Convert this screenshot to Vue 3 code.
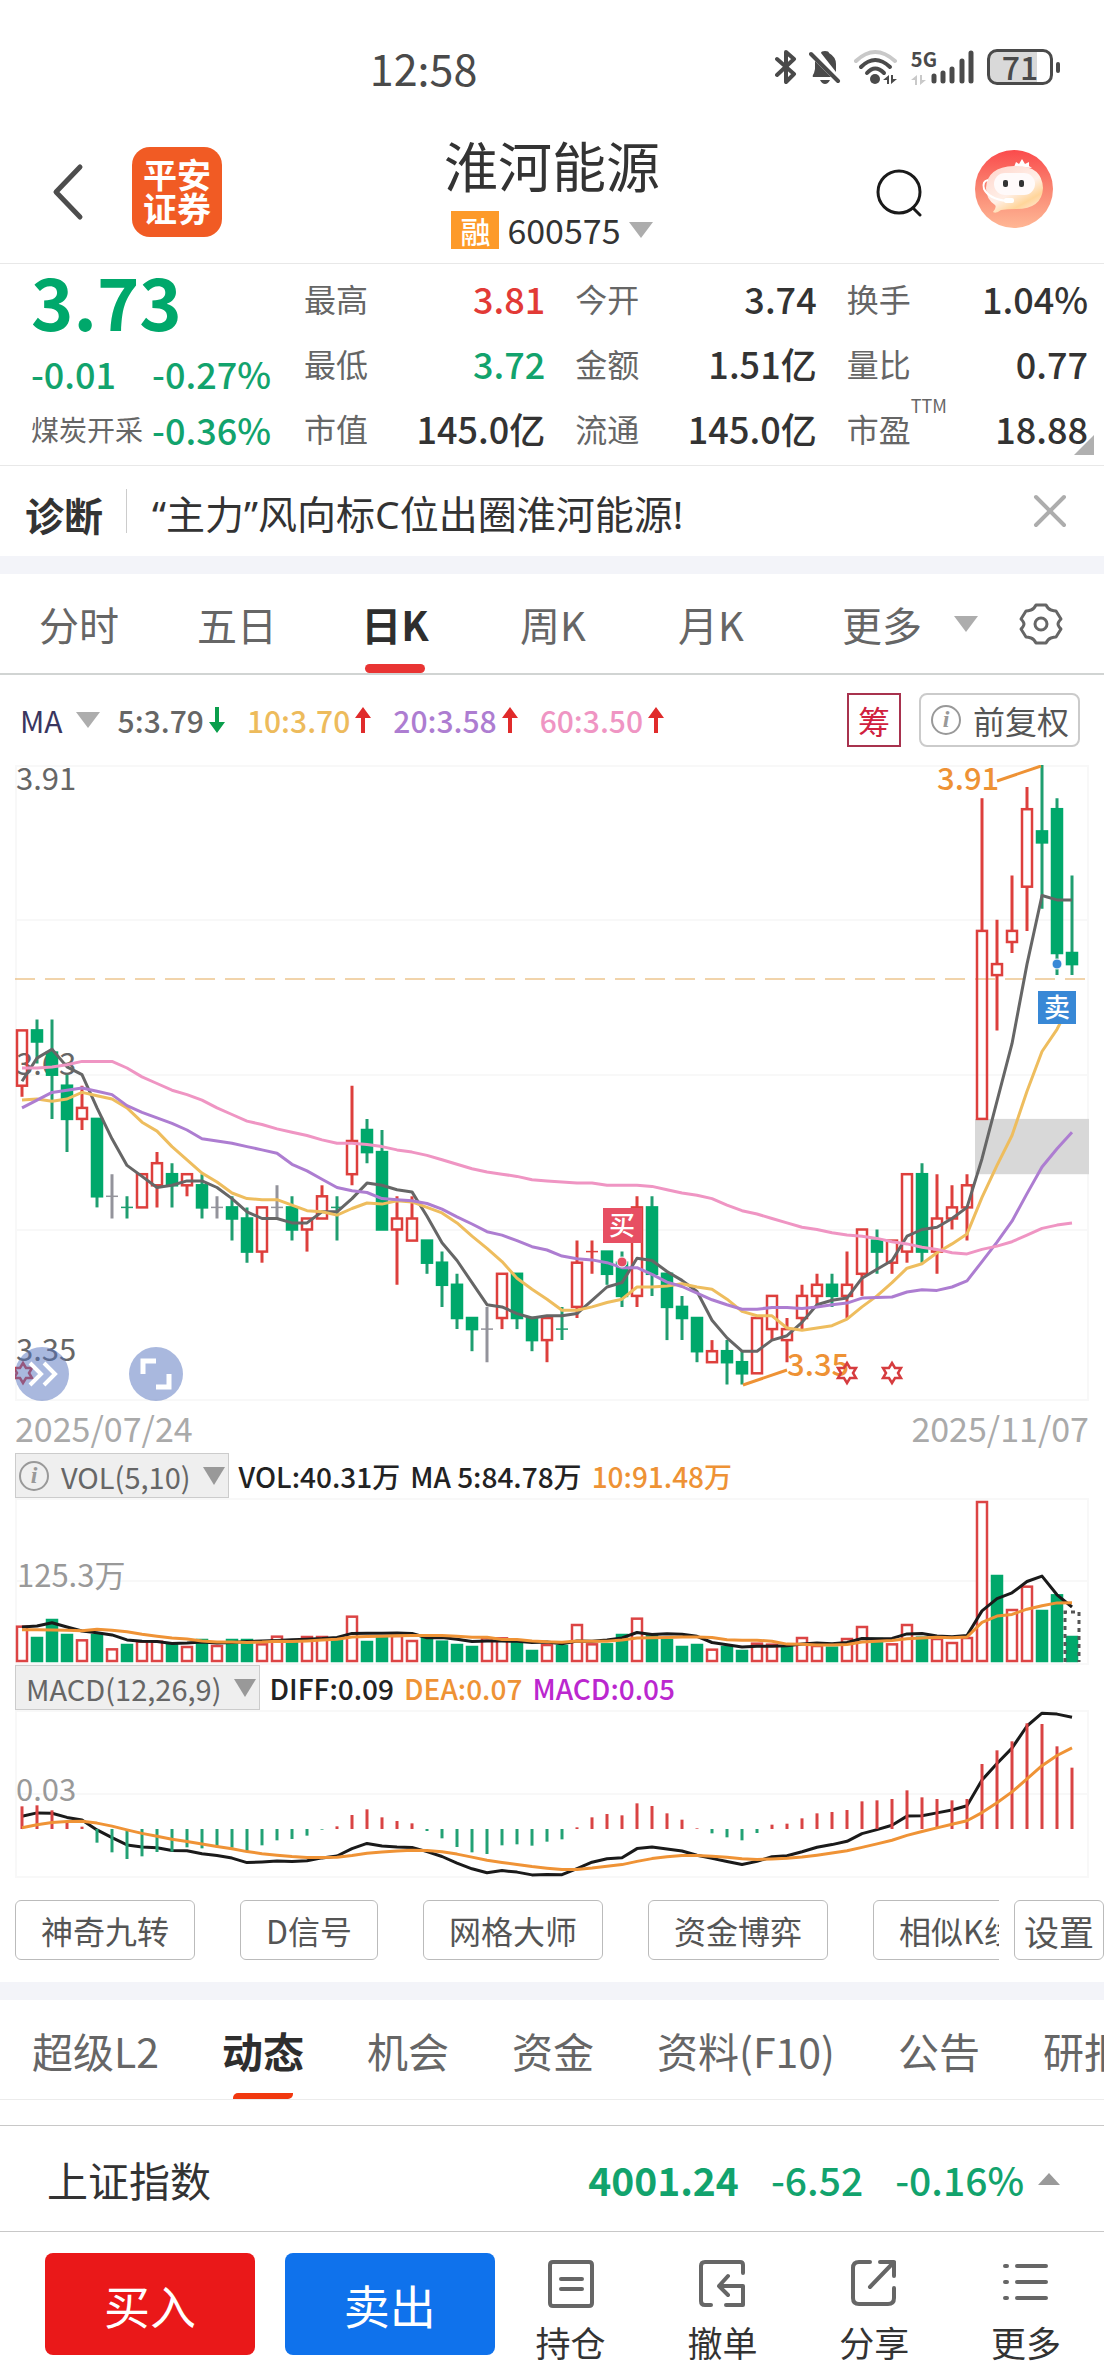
<template>
  <div class="page">
    <!-- 状态栏 -->
    <div class="status-bar">
      <span class="clock">12:58</span>
      <div class="status-icons">
        <svg class="ic-bt" width="22" height="36" viewBox="0 0 22 36">
          <path
            d="M2 10 L19 25 L11 33 L11 3 L19 10 L2 26"
            fill="none"
            stroke="#4a4a4a"
            stroke-width="4"
            stroke-linejoin="round"
            stroke-linecap="round"
          />
        </svg>
        <svg class="ic-bell" width="32" height="36" viewBox="0 0 32 36">
          <path
            d="M12 4 Q12 2 16 2 Q20 2 20 4 Q27 8 27 15 L27 23 Z M6 12 L22 28 L4 28 Q3 27 5 24 L6 20 Z"
            fill="#4a4a4a"
          />
          <path d="M11 31 H21 Q19 35 16 35 Q13 35 11 31 Z" fill="#4a4a4a" />
          <path d="M2 5 L29 32" stroke="#4a4a4a" stroke-width="4" stroke-linecap="round" />
        </svg>
        <svg class="ic-wifi" width="46" height="36" viewBox="0 0 46 36">
          <g fill="none" stroke-width="4" stroke-linecap="round">
            <path d="M3 12 Q22 -6 42 12" stroke="#c9c9c9" />
            <path d="M8 18 Q22 4 37 18" stroke="#4a4a4a" />
            <path d="M14 24 Q22 15 31 24" stroke="#4a4a4a" />
          </g>
          <circle cx="22" cy="30" r="5" fill="#4a4a4a" />
          <path d="M30 31 L36 26 V35 H34 V31 Z M38 26 H40 V30 L44 30 L38 35 Z" fill="#4a4a4a" />
        </svg>
        <div class="cell">
          <div class="cell-net">
            <span>5G</span>
            <svg width="16" height="10" viewBox="0 0 16 10">
              <path d="M0 5 L6 0 V10 H4 V5 Z M9 0 H11 V5 H15 L9 10 Z" fill="#c9c9c9" />
            </svg>
          </div>
          <svg width="46" height="36" viewBox="0 0 46 36">
            <path
              d="M5 27 V32 M14 24 V32 M23 20 V32 M33 12 V32 M42 4 V32"
              stroke="#4a4a4a"
              stroke-width="5"
              stroke-linecap="round"
            />
          </svg>
        </div>
        <div class="battery"><span>71</span></div>
      </div>
    </div>

    <!-- 标题 -->
    <header class="header">
      <div class="header-side">
        <button class="icon-btn" aria-label="返回">
          <svg width="34" height="58" viewBox="0 0 34 58">
            <path
              d="M30 4 L6 29 L30 54"
              fill="none"
              stroke="#4d4d4d"
              stroke-width="5"
              stroke-linecap="round"
              stroke-linejoin="round"
            />
          </svg>
        </button>
        <div class="logo">平安<br />证券</div>
      </div>
      <div class="title-box">
        <h1>淮河能源</h1>
        <button class="code">
          <span class="rong">融</span>
          <span>600575</span>
          <i class="tri"></i>
        </button>
      </div>
      <div class="header-side right">
        <button class="icon-btn" aria-label="搜索">
          <svg width="50" height="56" viewBox="0 0 50 56">
            <circle cx="25" cy="31" r="21" fill="none" stroke="#1a1a1a" stroke-width="3" />
            <path d="M39 47 L46 54" stroke="#1a1a1a" stroke-width="3" stroke-linecap="round" />
          </svg>
        </button>
        <button class="icon-btn" aria-label="客服">
          <svg width="80" height="80" viewBox="0 0 80 80">
            <defs>
              <linearGradient id="robot-bg" x1="0" y1="0" x2="0" y2="1">
                <stop offset="0" stop-color="#fb4b4c" />
                <stop offset="0.5" stop-color="#f98672" />
                <stop offset="1" stop-color="#ffb795" />
              </linearGradient>
              <linearGradient id="robot-body" x1="0.1" y1="0" x2="0.8" y2="1">
                <stop offset="0" stop-color="#ffd6cd" />
                <stop offset="0.55" stop-color="#fff0e8" />
                <stop offset="0.8" stop-color="#ffd59a" />
                <stop offset="1" stop-color="#ffe6d5" />
              </linearGradient>
            </defs>
            <circle cx="40" cy="40" r="39" fill="url(#robot-bg)" />
            <path d="M40 18 L42 13 L45 15 L48 10 L51 15 L55 13 L55 17 L58 19 Z" fill="#fff" />
            <path
              d="M40 17 Q68 16 69 39 Q68 60 42 60 Q33 60 27 61 Q22 65 19 63 Q23 58 21 56 Q12 50 12 39 Q13 18 40 17 Z"
              fill="url(#robot-body)"
            />
            <rect x="20" y="24" width="41" height="22" rx="11" fill="#fffafa" />
            <rect x="29" y="31" width="5" height="7" rx="2" fill="#333" />
            <rect x="45" y="31" width="5" height="7" rx="2" fill="#333" />
            <path
              d="M14 31 Q8 32 10 40 Q15 50 33 52"
              fill="none"
              stroke="#fff"
              stroke-width="2"
            />
            <rect x="30" y="49" width="10" height="5" rx="2" fill="#fff" />
          </svg>
        </button>
      </div>
    </header>

    <!-- 行情 -->
    <section class="quote">
      <div class="quote-main">
        <strong class="price">3.73</strong>
        <div class="change down"><span>-0.01</span><span>-0.27%</span></div>
        <div class="change down"><small>煤炭开采</small><span>-0.36%</span></div>
      </div>
      <dl class="stats">
        <div v-for="s in stats" :key="s.label" class="stat">
          <dt>{{ s.label }}<sup v-if="s.sup">{{ s.sup }}</sup></dt>
          <dd :class="s.cls">{{ s.value }}</dd>
        </div>
      </dl>
      <i class="corner"></i>
    </section>

    <!-- 诊断 -->
    <section class="diagnose">
      <b>诊断</b>
      <a href="#">“主力”风向标C位出圈淮河能源!</a>
      <button class="icon-btn" aria-label="关闭">
        <svg width="34" height="34" viewBox="0 0 34 34">
          <path
            d="M3 3 L31 31 M31 3 L3 31"
            stroke="#adadad"
            stroke-width="4"
            stroke-linecap="round"
          />
        </svg>
      </button>
    </section>

    <!-- 周期 -->
    <nav class="periods">
      <button v-for="p in periods" :key="p" :class="{ active: p === '日K' }">{{ p }}</button>
      <div class="period-more">
        <button>更多</button>
        <i class="tri"></i>
        <button aria-label="图表设置">
          <svg width="44" height="44" viewBox="0 0 44 44">
            <path
              d="M17 3 H27 Q29 7 32 8 Q35 9 37 9 L42 17 Q39 20 39 22 Q39 24 42 27 L37 35 Q35 35 32 36 Q29 37 27 41 H17 Q15 37 12 36 Q9 35 7 35 L2 27 Q5 24 5 22 Q5 20 2 17 L7 9 Q9 9 12 8 Q15 7 17 3 Z"
              fill="none"
              stroke="#666"
              stroke-width="3"
              stroke-linejoin="round"
            />
            <circle cx="22" cy="22" r="6" fill="none" stroke="#666" stroke-width="3" />
          </svg>
        </button>
      </div>
    </nav>

    <!-- 均线 -->
    <div class="ma-row">
      <button class="ma-name">MA<i class="tri"></i></button>
      <span v-for="m in maList" :key="m.text" class="ma-item" :class="m.cls">
        {{ m.text }}
        <svg width="16" height="26" viewBox="0 0 16 26">
          <path v-if="m.up" d="M8 0 L16 11 H10 V26 H6 V11 H0 Z" fill="#e02b2b" />
          <path v-else d="M8 26 L16 15 H10 V0 H6 V15 H0 Z" fill="#0a9e4c" />
        </svg>
      </span>
      <button class="chip-chou">筹</button>
      <button class="chip-fq"><i class="info">i</i>前复权</button>
    </div>

    <!-- K线 -->
    <div class="charts">
      <div class="k-box">
        <svg class="chart" viewBox="0 0 1074 636">
          <path class="grid" d="M0 1 H1074 M0 155 H1074 M0 310 H1074 M0 465 H1074 M0 635 H1074 M1 0 V636 M1073 0 V636" />
          <text x="1" y="25" class="axis dark">3.91</text>
          <text x="1" y="310" class="axis dark">3.63</text>
          <text x="1" y="596" class="axis dark">3.35</text>
          <rect x="960" :y="yPrice(24)" width="114" :height="yPrice(19) - yPrice(24)" fill="#d8d8d8" />
          <path d="M0 214 H1074" stroke="#e3a857" stroke-width="1" stroke-dasharray="20 10" />
          <g v-for="k in candles" :key="k.x" :stroke="k.wick" stroke-width="3">
            <path :d="k.line" />
            <rect
              v-if="k.h > 0"
              :x="k.x - 5"
              :y="k.y"
              width="10"
              :height="k.h"
              :fill="k.fill"
              :stroke="k.body"
              stroke-width="2.5"
            />
            <path v-else :d="`M${k.x - 6} ${k.y} H${k.x + 6}`" stroke-width="1.5" />
          </g>
          <g fill="none" stroke-width="3" stroke-linejoin="round">
            <polyline :points="pts(ma5, yPrice)" stroke="#666" />
            <polyline :points="pts(ma10, yPrice)" stroke="#eebd5e" />
            <polyline :points="pts(ma20, yPrice)" stroke="#ad7dd1" />
            <polyline :points="pts(ma60, yPrice)" stroke="#ef95c3" />
          </g>
          <path d="M982 16 L1026 1 M728 620 L772 605" stroke="#ee9235" stroke-width="3" />
          <text x="922" y="25" class="axis orange">3.91</text>
          <text x="772" y="611" class="axis orange">3.35</text>
          <path
            v-for="x in [8, 832, 877]"
            :key="x"
            :transform="`translate(${x} 608)`"
            d="M0 -10 L3 -5 H9 L6 0 L9 5 H3 L0 10 L-3 5 H-9 L-6 0 L-9 -5 H-3 Z"
            fill="none"
            stroke="#d63c3f"
            stroke-width="2.5"
          />
          <circle cx="607" cy="497" r="5" fill="#e74f63" stroke="#fff" />
          <rect x="588" y="443" width="39" height="35" fill="#e74f63" />
          <text x="607" y="470" class="tag">买</text>
          <circle cx="1042" cy="199" r="5" fill="#3888d6" stroke="#fff" />
          <rect x="1023" y="226" width="38" height="33" fill="#3888d6" />
          <text x="1042" y="252" class="tag">卖</text>
        </svg>
        <div class="floats">
          <button aria-label="展开">
            <svg width="54" height="54" viewBox="0 0 54 54">
              <path
                d="M15 16 L26 27 L15 38 M29 16 L40 27 L29 38"
                fill="none"
                stroke="#fff"
                stroke-width="4"
              />
            </svg>
          </button>
          <button aria-label="全屏">
            <svg width="54" height="54" viewBox="0 0 54 54">
              <path
                d="M14 27 V14 H27 M40 27 V40 H27"
                fill="none"
                stroke="#fff"
                stroke-width="5"
              />
            </svg>
          </button>
        </div>
      </div>
      <div class="dates"><span>2025/07/24</span><span>2025/11/07</span></div>

      <!-- 成交量 -->
      <div class="ind-row">
        <button><i class="info">i</i>VOL(5,10)<i class="tri"></i></button>
        <span>VOL:40.31万</span>
        <span>MA 5:84.78万</span>
        <span class="orange">10:91.48万</span>
      </div>
      <svg class="chart" viewBox="0 0 1074 167">
        <path class="grid" d="M0 1 H1074 M0 83 H1074 M0 166 H1074 M1 0 V167 M1073 0 V167" />
        <text x="2" y="89" class="axis light">125.3万</text>
        <rect
          v-for="b in volBars"
          :key="b.x"
          :x="b.x - 5"
          :y="b.y"
          width="10"
          :height="b.h"
          :fill="b.up ? '#fff' : '#00a86b'"
          :stroke="b.up ? '#dc4444' : '#00a86b'"
          stroke-width="2.5"
        />
        <path
          d="M1050 164 V114 H1064 V164"
          fill="none"
          stroke="#555"
          stroke-width="3"
          stroke-dasharray="4 4"
        />
        <g fill="none" stroke-width="3" stroke-linejoin="round">
          <polyline :points="pts(volMa5, yVol)" stroke="#1a1a1a" />
          <polyline :points="pts(volMa10, yVol)" stroke="#ef9336" />
        </g>
      </svg>

      <!-- MACD -->
      <div class="ind-row">
        <button class="plain">MACD(12,26,9)<i class="tri"></i></button>
        <span>DIFF:0.09</span>
        <span class="orange">DEA:0.07</span>
        <span class="purple">MACD:0.05</span>
      </div>
      <svg class="chart" viewBox="0 0 1074 168">
        <path class="grid" d="M0 1 H1074 M0 84 H1074 M0 167 H1074 M1 0 V168 M1073 0 V168" />
        <text x="1" y="91" class="axis light">0.03</text>
        <polyline
          :points="pts(diff, yMacd)"
          fill="none"
          stroke="#1a1a1a"
          stroke-width="3"
          stroke-linejoin="round"
        />
        <path
          v-for="(m, i) in macd"
          :key="i"
          :d="`M${xAt(i)} 119 V${yMacd(m)}`"
          :stroke="m > 0 ? '#d94343' : '#22a174'"
          stroke-width="3"
        />
        <polyline
          :points="pts(dea, yMacd)"
          fill="none"
          stroke="#ef9336"
          stroke-width="3"
          stroke-linejoin="round"
        />
      </svg>
    </div>

    <!-- 工具 -->
    <div class="tools">
      <div class="tools-list">
        <button v-for="t in tools" :key="t">{{ t }}</button>
      </div>
      <button class="tools-set">设置</button>
    </div>

    <nav class="info-tabs">
      <button v-for="t in infoTabs" :key="t" :class="{ active: t === '动态' }">{{ t }}</button>
    </nav>

    <!-- 指数 -->
    <div class="index-row">
      <span class="index-name">上证指数</span>
      <b>4001.24</b>
      <span>-6.52</span>
      <span>-0.16%</span>
      <i class="tri up"></i>
    </div>

    <footer class="footer">
      <button class="trade buy">买入</button>
      <button class="trade sell">卖出</button>
      <div class="actions">
        <button v-for="a in actions" :key="a.name">
          <svg width="48" height="50" viewBox="0 0 48 50">
            <path
              :d="a.path"
              fill="none"
              stroke="#666"
              stroke-width="4"
              stroke-linecap="round"
              stroke-linejoin="round"
            />
          </svg>
          <span>{{ a.name }}</span>
        </button>
      </div>
    </footer>
  </div>
</template>

<script setup>
const stats = [
  { label: '最高', value: '3.81', cls: 'up' },
  { label: '今开', value: '3.74' },
  { label: '换手', value: '1.04%' },
  { label: '最低', value: '3.72', cls: 'down' },
  { label: '金额', value: '1.51亿' },
  { label: '量比', value: '0.77' },
  { label: '市值', value: '145.0亿' },
  { label: '流通', value: '145.0亿' },
  { label: '市盈', value: '18.88', sup: 'TTM' },
];

const periods = ['分时', '五日', '日K', '周K', '月K'];

const maList = [
  { text: '5:3.79', cls: 'm5', up: false },
  { text: '10:3.70', cls: 'm10', up: true },
  { text: '20:3.58', cls: 'm20', up: true },
  { text: '60:3.50', cls: 'm60', up: true },
];

const tools = ['神奇九转', 'D信号', '网格大师', '资金博弈', '相似K线'];
const infoTabs = ['超级L2', '动态', '机会', '资金', '资料(F10)', '公告', '研报'];

const actions = [
  {
    name: '持仓',
    path: 'M6 3 H42 Q45 3 45 6 V44 Q45 47 42 47 H6 Q3 47 3 44 V6 Q3 3 6 3 Z M14 20 H35 M14 30 H35',
  },
  {
    name: '撤单',
    path: 'M45 14 V6 Q45 3 42 3 H7 Q3 3 3 7 V42 Q3 46 7 46 H13 M28 46 H45 V27 H21 M30 17 L21 27 L30 36',
  },
  {
    name: '分享',
    path: 'M20 3 H9 Q3 3 3 9 V39 Q3 45 9 45 H38 Q44 45 44 39 V29 M30 3 H44 V17 M44 3 L20 28',
  },
  { name: '更多', path: 'M3 7 H5 M15 7 H44 M3 23 H5 M15 23 H44 M3 39 H5 M15 39 H44' },
];

// [开, 高, 低, 收]，单位 0.01 元，以 3.35 为 0
const kline = [
  [27, 32, 26, 32], [32, 33, 29, 31], [30, 33, 24, 28], [27, 28, 21, 24], [24, 27, 23, 25],
  [24, 24, 16, 17], [17, 19, 15, 17], [16, 17, 15, 16], [16, 19, 16, 19], [18, 21, 16, 20],
  [19, 20, 16, 18], [18, 19, 17, 19], [18, 19, 15, 16], [16, 17, 15, 16], [16, 17, 13, 15],
  [15, 16, 11, 12], [12, 16, 11, 16], [16, 18, 15, 16], [16, 17, 13, 14], [14, 15, 12, 15],
  [15, 18, 15, 17], [16, 17, 13, 16], [19, 27, 18, 22], [23, 24, 20, 21], [21, 23, 14, 14],
  [14, 17, 9, 15], [13, 17, 13, 15], [13, 13, 10, 11], [11, 12, 7, 9], [9, 10, 5, 6],
  [6, 6, 3, 5], [5, 7, 2, 5], [6, 10, 5, 10], [10, 10, 5, 6], [6, 6, 3, 4],
  [4, 6, 2, 6], [5, 7, 4, 5], [7, 13, 6, 11], [12, 13, 10, 12], [12, 12, 9, 10],
  [11, 12, 7, 8], [8, 17, 7, 16], [16, 17, 8, 10], [10, 10, 4, 7], [7, 8, 4, 6],
  [6, 6, 2, 3], [2, 4, 2, 3], [3, 4, 0, 2], [2, 3, 0, 1], [1, 6, 1, 6],
  [5, 8, 4, 8], [4, 6, 2, 5], [6, 9, 5, 8], [8, 10, 7, 9], [9, 10, 7, 8],
  [8, 12, 6, 9], [10, 14, 8, 14], [13, 14, 10, 12], [11, 13, 10, 13], [12, 19, 11, 19],
  [19, 20, 11, 12], [12, 19, 10, 15], [15, 18, 14, 16], [16, 19, 13, 18], [24, 53, 24, 41],
  [37, 42, 32, 38], [40, 46, 39, 41], [45, 54, 41, 52], [50, 56, 43, 49], [52, 53, 37, 39],
  [39, 46, 37, 38],
];

const volume = [
  109, 75, 129, 84, 68, 84, 41, 54, 64, 64, 54, 48, 69, 51, 69, 69, 56, 79, 60, 78, 78, 74, 139,
  63, 78, 81, 66, 77, 64, 54, 48, 74, 74, 60, 36, 54, 51, 114, 56, 56, 84, 133, 82, 69, 48, 54, 40,
  48, 36, 58, 55, 48, 75, 51, 46, 72, 108, 72, 56, 114, 76, 72, 60, 75, 483, 261, 159, 229, 156,
  203, 78,
];

const macd = [
  68, 71, 56, 25, 7, -41, -70, -90, -82, -69, -68, -55, -58, -55, -56, -66, -49, -34, -30, -20, -2,
  8, 42, 59, 35, 24, 17, -6, -28, -54, -70, -75, -49, -46, -50, -38, -31, 5, 35, 45, 41, 77, 69, 47,
  28, 2, -13, -25, -34, -12, 13, 16, 32, 47, 51, 57, 83, 86, 90, 116, 95, 90, 86, 90, 195, 236, 263,
  317, 315, 248, 184,
];

const ma60 = [
  28.6, 28.6, 28.7, 28.9, 29.2, 29.2, 29.2, 28.6, 27.8, 27.2, 26.6, 26.2, 25.7, 25, 24.4, 23.8,
  23.5, 23.1, 22.8, 22.5, 22.1, 21.8, 21.8, 21.7, 21.5, 21.2, 21, 20.7, 20.3, 19.9, 19.5, 19.2, 19,
  18.8, 18.5, 18.4, 18.3, 18.2, 18.2, 18, 18, 18, 17.9, 17.6, 17.3, 17.1, 16.8, 16.2, 15.7, 15.4,
  15, 14.6, 14.2, 14, 13.7, 13.5, 13.4, 13.2, 12.9, 12.7, 12.4, 12.2, 11.9, 11.8, 12.2, 12.5, 12.9,
  13.5, 14.1, 14.4, 14.6,
];

const xAt = (i) => 7 + i * 15;
const yPrice = (n) => Math.round((56 - n) * 11.06 * 10) / 10;
const yVol = (v) => 164 - v / 3;
const yMacd = (v) => Math.min(165, 119 - v / 3);
const pts = (list, y) => list.map((v, i) => `${xAt(i)},${y(v).toFixed(1)}`).join(' ');

// 前几根没有足够历史，用 head 补齐
const average = (list, n, head) =>
  list.map((_, i) =>
    i < n - 1 ? head[i] : list.slice(i - n + 1, i + 1).reduce((a, b) => a + b, 0) / n
  );

const closes = kline.map((k) => k[3]);
const ma5 = average(closes, 5, [27.4, 29.5, 30.3, 28.7]);
const ma10 = average(closes, 10, [25.7, 25.8, 25.6, 25.8, 26.4, 26.1, 25.8, 25, 23.7]);
const ma20 = average(closes, 20, [
  25, 25.7, 26.4, 26.6, 26.8, 26.5, 26.2, 25.2, 24.6, 24.1, 23.6, 23, 22.2, 22, 21.8, 21.5, 21.2,
  20.9, 19.9,
]);
const volMa5 = average(volume, 5, [105, 108, 118, 105]);
const volMa10 = average(volume, 10, [97, 97, 96, 95, 94, 98, 95, 91, 83]);

const candles = kline.map(([o, h, l, c], i) => {
  const x = xAt(i);
  const prev = i ? closes[i - 1] : o;
  const dir = Math.sign(c - o || c - prev);
  const wick = dir > 0 ? '#dd3f3c' : dir < 0 ? '#1f9e70' : '#93939b';
  const top = yPrice(Math.max(o, c));
  const bottom = yPrice(Math.min(o, c));
  return {
    x,
    y: top,
    h: bottom - top,
    wick,
    body: dir > 0 ? '#dd3f3c' : '#00a86b',
    fill: dir > 0 ? 'none' : '#00a86b',
    line: `M${x} ${yPrice(h)} V${top} M${x} ${bottom} V${yPrice(l)}`,
  };
});

const volBars = volume.map((v, i) => ({
  x: xAt(i),
  y: yVol(v) + 1,
  h: v / 3 - 2,
  up: i === 0 || closes[i] >= closes[i - 1],
}));

const dea = [];
macd.forEach((m, i) => dea.push(i ? dea[i - 1] + m / 8 - 0.2 : 4));
const diff = macd.map((m, i) => dea[i] + m / 2);
</script>

<style>
body {
  margin: 0;
  background: #fff;
}
</style>

<style scoped>
.page {
  font-family: 'Noto Sans CJK SC', sans-serif;
  color: #333;
  background: #fff;
  overflow: hidden;
}

button {
  font: inherit;
  color: inherit;
  background: none;
  border: 0;
  padding: 0;
}

svg {
  display: block;
}

a {
  color: inherit;
  text-decoration: none;
}

.tri {
  flex: none;
  border: 12px solid transparent;
  border-top: 16px solid #adadad;
  border-bottom: 0;
}

.tri.up {
  border: 11px solid transparent;
  border-bottom: 12px solid #9a9a9a;
  border-top: 0;
}

.up {
  color: #e23a36;
}

.down {
  color: #12a36d;
}

/* 状态栏 */
.status-bar {
  display: flex;
  align-items: center;
  justify-content: space-between;
  height: 134px;
  padding: 0 44px 0 33.5%;
  color: #4a4a4a;
}

.clock {
  font-size: 43px;
  line-height: 44px;
}

.status-icons {
  display: flex;
  align-items: center;
  gap: 12px;
}

.cell {
  display: flex;
}

.cell-net {
  display: flex;
  flex-direction: column;
  gap: 6px;
  font-size: 20px;
  line-height: 20px;
  font-weight: 700;
  margin-right: -8px;
}

.battery {
  position: relative;
  box-sizing: border-box;
  width: 66px;
  height: 36px;
  margin-right: 7px;
  border: 3px solid #4a4a4a;
  border-radius: 10px;
  background: linear-gradient(90deg, #d9d9d9 78%, #fff 78%);
  font-size: 32px;
  line-height: 28px;
  font-weight: 500;
  text-align: center;
}

.battery::after {
  content: '';
  position: absolute;
  right: -10px;
  top: 10px;
  width: 4px;
  height: 11px;
  border-radius: 2px;
  background: #4a4a4a;
}

/* 标题 */
.header {
  display: grid;
  grid-template-columns: 1fr auto 1fr;
  box-sizing: border-box;
  height: 130px;
  border-bottom: 1px solid #e8e8e8;
}

.header-side {
  display: flex;
  align-items: center;
  gap: 48px;
  padding: 0 0 13px 50px;
}

.header-side.right {
  justify-content: flex-end;
  gap: 50px;
  padding: 0 50px 20px 0;
}

.logo {
  box-sizing: border-box;
  width: 90px;
  height: 90px;
  padding-top: 10px;
  border-radius: 18px;
  background: #f15b24;
  color: #fff;
  font-size: 34px;
  line-height: 34px;
  font-weight: 700;
  text-align: center;
}

.title-box {
  display: flex;
  flex-direction: column;
  align-items: center;
  gap: 16px;
  padding-top: 1px;
}

h1 {
  margin: 0;
  font-size: 54px;
  line-height: 60px;
  font-weight: 400;
}

.code {
  display: flex;
  align-items: center;
  gap: 8px;
  font-size: 34px;
  line-height: 38px;
}

.rong {
  width: 48px;
  background: #fd9a29;
  color: #fff;
  font-size: 30px;
  font-weight: 500;
}

/* 行情 */
.quote {
  position: relative;
  display: flex;
  box-sizing: border-box;
  height: 202px;
  border-bottom: 1px solid #e8e8e8;
}

.quote-main {
  flex: none;
  width: 240px;
  padding: 0 33px 0 31px;
}

.price {
  display: block;
  margin-bottom: 9px;
  font-size: 72px;
  line-height: 72px;
  font-weight: 700;
  color: #00a86b;
}

.change {
  display: flex;
  justify-content: space-between;
  align-items: center;
  font-size: 36px;
  line-height: 56px;
  font-weight: 500;
}

.change small {
  font-size: 28px;
  font-weight: 400;
  color: #666;
}

.stats {
  flex: 1;
  display: grid;
  grid-template-columns: repeat(3, 1fr);
  grid-auto-rows: 65px;
  column-gap: 30px;
  margin: 0;
  padding: 2px 16px 0 0;
}

.stat {
  display: flex;
  justify-content: space-between;
  line-height: 64px;
}

dt {
  position: relative;
  font-size: 32px;
  color: #666;
}

dt sup {
  position: absolute;
  left: 100%;
  top: 0;
  font-size: 18px;
  line-height: 18px;
}

dd {
  margin: 0;
  font-size: 36px;
  font-weight: 500;
}

.corner {
  position: absolute;
  right: 10px;
  bottom: 10px;
  border-left: 20px solid transparent;
  border-bottom: 20px solid #b0b0b0;
}

/* 诊断 */
.diagnose {
  display: flex;
  align-items: center;
  height: 90px;
  padding: 0 37px 0 25px;
  font-size: 39px;
  line-height: 38px;
  border-bottom: 18px solid #f3f4f9;
}

.diagnose b {
  padding: 6px 23px 0 0;
  border-right: 1px solid #ccc;
}

.diagnose a {
  flex: 1;
  padding: 6px 0 0 25px;
  font-family: 'Noto Sans', 'Noto Sans CJK SC', sans-serif;
}

/* 周期 */
.periods {
  display: grid;
  grid-template-columns: repeat(5, 158fr) 314fr;
  height: 99px;
  border-bottom: 2px solid #d1d4d3;
  font-size: 40px;
  color: #666;
}

.active {
  position: relative;
  font-weight: 700;
  color: #2e2e2e;
}

.active::after {
  content: '';
  position: absolute;
  left: 50%;
  bottom: 0;
  width: 60px;
  height: 9px;
  margin-left: -30px;
  border-radius: 5px;
  background: #e93433;
}

.period-more {
  display: flex;
  align-items: center;
  justify-content: space-between;
  padding: 0 41px 0 52px;
}

.period-more .tri {
  margin-right: 9px;
}

/* 均线 */
.ma-row {
  display: flex;
  align-items: center;
  height: 90px;
  padding: 0 24px 0 20px;
  font-size: 30px;
}

.ma-name {
  display: flex;
  align-items: center;
  gap: 13px;
  margin-right: 18px;
  color: #3a365f;
}

.ma-item {
  display: flex;
  align-items: center;
  gap: 5px;
  margin-right: 22px;
  font-weight: 500;
}

.m5 {
  color: #666;
}

.m10 {
  color: #edbb5c;
}

.m20 {
  color: #ad7dd1;
}

.m60 {
  color: #ef95c3;
}

.chip-chou,
.chip-fq {
  box-sizing: border-box;
  height: 54px;
  font-size: 32px;
}

.chip-chou {
  width: 54px;
  margin-left: auto;
  margin-right: 18px;
  border: 2px solid #a8324e;
  color: #d0203e;
}

.chip-fq {
  display: flex;
  align-items: center;
  gap: 12px;
  padding: 0 9px 0 10px;
  border: 2px solid #cbcbcb;
  border-radius: 8px;
  color: #555;
}

.info {
  box-sizing: border-box;
  width: 30px;
  height: 30px;
  border: 2px solid #999;
  border-radius: 50%;
  color: #999;
  font: italic 700 24px/25px 'Liberation Serif', serif;
  text-align: center;
}

/* 图表 */
.charts {
  padding: 0 15px;
}

.chart {
  width: 100%;
  height: auto;
}

.grid {
  fill: none;
  stroke: #f8f8f8;
  stroke-width: 2;
}

.axis {
  font-size: 31px;
}

.axis.dark {
  fill: #666;
}

.axis.light {
  fill: #999;
}

.axis.orange {
  fill: #ee9235;
  font-weight: 500;
}

.tag {
  fill: #fff;
  font-size: 26px;
  font-weight: 500;
  text-anchor: middle;
}

.k-box {
  position: relative;
}

.floats {
  position: absolute;
  left: 0;
  bottom: 0;
  display: flex;
  gap: 60px;
}

.floats button {
  border-radius: 50%;
  background: rgba(83, 113, 189, 0.5);
}

.dates {
  display: flex;
  justify-content: space-between;
  height: 52px;
  font-size: 34px;
  line-height: 54px;
  color: #aaa;
}

.ind-row {
  display: flex;
  align-items: center;
  gap: 10px;
  height: 45px;
  font-size: 28px;
  font-weight: 500;
  color: #222;
}

.ind-row button {
  display: flex;
  align-items: center;
  gap: 12px;
  box-sizing: border-box;
  height: 45px;
  padding: 0 3px;
  border: 1px solid #ccc;
  background: #efefef;
  font-size: 29px;
  font-weight: 400;
  color: #666;
}

.ind-row .plain {
  padding-left: 10px;
}

.ind-row .tri {
  border-width: 18px 11px 0;
  border-top-color: #999;
}

.ind-row .orange {
  color: #ee9235;
}

.ind-row .purple {
  color: #bb27cf;
}

/* 工具 */
.tools {
  display: flex;
  gap: 15px;
  padding: 22px 0 22px 15px;
  border-bottom: 18px solid #f3f4f9;
  color: #555;
}

.tools-list {
  flex: 1;
  min-width: 0;
  display: flex;
  gap: 45px;
  overflow: hidden;
}

.tools button {
  flex: none;
  box-sizing: border-box;
  height: 60px;
  padding: 0 25px;
  border: 1px solid #bbb;
  border-radius: 6px;
  font-size: 32px;
}

.tools .tools-set {
  width: 90px;
  padding: 0;
  font-size: 35px;
}

.info-tabs {
  display: flex;
  gap: 63px;
  height: 99px;
  margin-bottom: 25px;
  padding-left: 32px;
  border-bottom: 1px solid #ececec;
  font-size: 41px;
  color: #666;
}

.info-tabs button {
  flex: none;
}

.info-tabs .active::after {
  height: 6px;
  border-radius: 5px 0;
  background: #f1380f;
}

/* 指数 */
.index-row {
  display: flex;
  align-items: center;
  gap: 32px;
  height: 105px;
  padding: 0 44px 0 47px;
  border-top: 1px solid #c8c8c8;
  border-bottom: 1px solid #c8c8c8;
  font-size: 39px;
  font-weight: 500;
  color: #12a36d;
}

.index-name {
  flex: 1;
  font-size: 41px;
  font-weight: 400;
  color: #333;
}

.index-row .tri {
  margin-left: -18px;
}

/* 底部 */
.footer {
  display: flex;
  gap: 30px;
  padding: 21px 2px 14px 45px;
}

.trade {
  flex: 210;
  height: 102px;
  border-radius: 8px;
  color: #fff;
  font-size: 46px;
}

.buy {
  background: #ea1819;
}

.sell {
  background: #0f72ec;
}

.actions {
  flex: 608;
  display: flex;
  min-height: 109px;
  margin-left: -30px;
}

.actions button {
  flex: 1;
  display: flex;
  flex-direction: column;
  align-items: center;
  justify-content: space-between;
  padding-top: 6px;
  font-size: 35px;
  line-height: 40px;
}
</style>
